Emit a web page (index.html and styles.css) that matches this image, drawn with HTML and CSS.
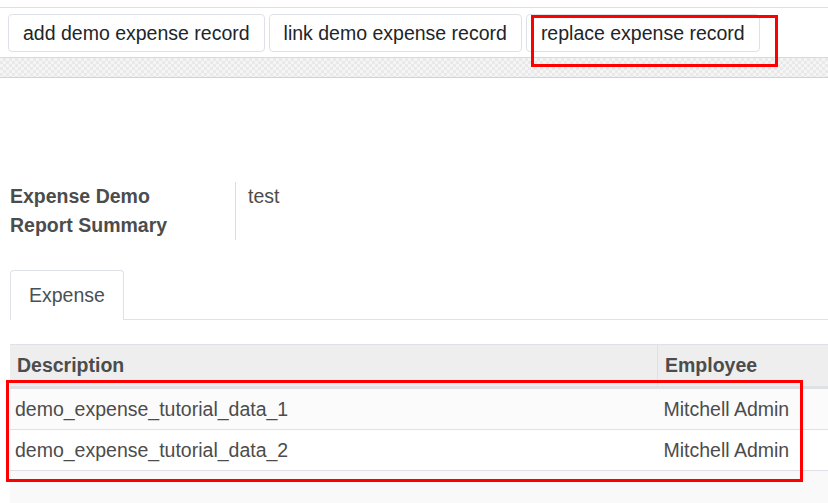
FILE: index.html
```html
<!DOCTYPE html>
<html lang="en">
<head>
    <meta charset="UTF-8">
    <meta name="viewport" content="width=device-width, initial-scale=1.0">
    <title>Expense Demo Report</title>
    <link rel="stylesheet" href="styles.css">
</head>
<body>
    <div class="header">
        <div class="buttons">
            <button class="button">add demo expense record</button>
            <button class="button">link demo expense record</button>
            <button class="button">replace expense record</button>
        </div>
        <div class="band"></div>
    </div>

    <div class="sheet">
        <div class="field">
            <div class="label">Expense Demo<br>Report Summary</div>
            <div class="value">test</div>
        </div>

        <div class="tabs">
            <div class="tab">Expense</div>
        </div>

        <table class="lines">
            <thead>
                <tr>
                    <th class="col-desc">Description</th>
                    <th>Employee</th>
                </tr>
            </thead>
            <tbody>
                <tr class="odd">
                    <td>demo_expense_tutorial_data_1</td>
                    <td>Mitchell Admin</td>
                </tr>
                <tr>
                    <td>demo_expense_tutorial_data_2</td>
                    <td>Mitchell Admin</td>
                </tr>
            </tbody>
        </table>
        <div class="table-foot"></div>
    </div>

    <!-- annotation boxes -->
    <div class="mark mark-button"></div>
    <div class="mark mark-rows"></div>
</body>
</html>
```

FILE: styles.css
```css
body {
    margin: 0;
    font-family: "Liberation Sans", Arial, sans-serif;
    font-size: 19.5px;
    color: #4c4c4c;
    background-color: white;
    overflow: hidden;
    height: 503px;
    position: relative;
}
.header {
    padding-top: 7px;
}
.buttons {
    border-top: 1px solid #dcdfe3;
    padding: 6px 8px 5px;
    display: flex;
    gap: 4px;
}
.button {
    font-family: inherit;
    font-size: 19.5px;
    color: #212529;
    background-color: white;
    border: 1px solid #dee2e6;
    border-radius: 4px;
    height: 38px;
    padding: 0 14px;
    line-height: 36px;
}
.band {
    height: 19px;
    border-top: 1px solid #d6d9dd;
    border-bottom: 1px solid #cfd2d6;
    background-color: #f3f3f3;
    background-image: repeating-conic-gradient(#e9e9e9 0 25%, #f5f5f5 0 50%);
    background-size: 6px 6px;
}
.sheet {
    padding: 104px 0 0 10px;
}
.field {
    display: flex;
}
.label {
    width: 225px;
    font-weight: bold;
    line-height: 29px;
    border-right: 1px solid #dcdcdc;
}
.value {
    padding-left: 12px;
    line-height: 29px;
}
.tabs {
    margin-top: 30px;
    border-bottom: 1px solid #dee2e6;
    display: flex;
    align-items: flex-start;
    height: 49px;
}
.tab {
    border: 1px solid #dee2e6;
    border-bottom: none;
    border-radius: 4px 4px 0 0;
    background-color: white;
    color: #495057;
    padding: 10px 18px;
    line-height: 29px;
    height: 29px;
}
.lines {
    margin-top: 24px;
    border-collapse: collapse;
    width: 100%;
}
.lines th {
    background-color: #eeeeee;
    text-align: left;
    font-weight: bold;
    height: 41px;
    padding: 0 6px 0 7px;
    border-top: 1px solid #dee2e6;
    border-bottom: 3px solid #dee2e6;
    border-left: 1px solid #dee2e6;
}
.lines th.col-desc {
    width: 634px;
    border-left: none;
}
.lines td {
    height: 39px;
    padding: 1px 6px 0 5px;
    border-bottom: 1px solid #dee2e6;
}
.lines td + td {
    padding-left: 6px;
}
.lines tr.odd td {
    background-color: #fbfbfb;
}
.table-foot {
    height: 40px;
    background-color: #f9f9f9;
}
.mark {
    position: absolute;
    border: 3px solid #ff0000;
    box-sizing: border-box;
}
.mark-button {
    left: 531px;
    top: 15px;
    width: 247px;
    height: 52px;
}
.mark-rows {
    left: 6px;
    top: 380px;
    width: 797px;
    height: 102px;
}
```
